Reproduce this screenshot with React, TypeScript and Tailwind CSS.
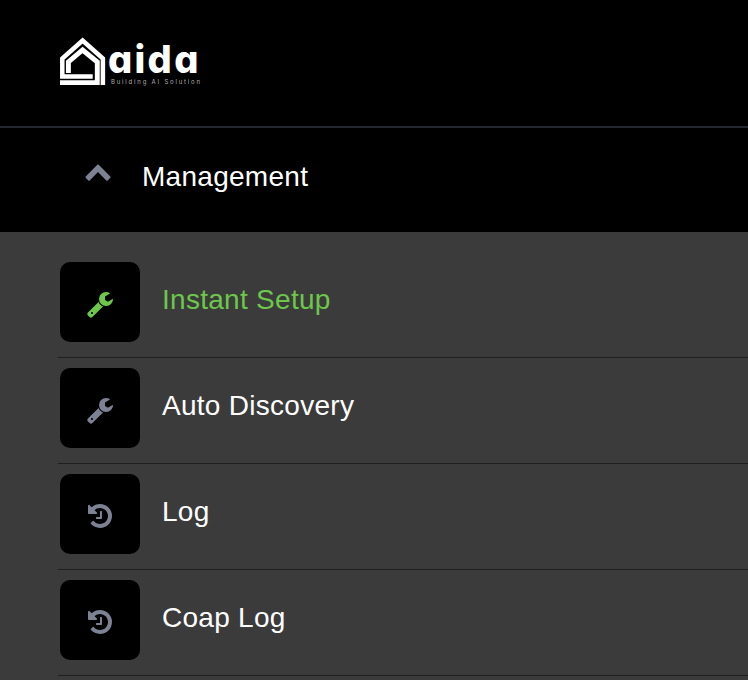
const WRENCH =
  "M384 1472q0-26-19-45t-45-19-45 19-19 45 19 45 45 19 45-19 19-45zm644-420l-682 682q-37 37-90 37-52 0-91-37l-106-108q-38-36-38-90 0-53 38-91l681-681q39 98 114.500 173.500t173.500 114.500zm634-435q0 39-23 106-47 134-164.500 217.500t-258.500 83.500q-185 0-316.500-131.500t-131.500-316.500 131.500-316.500 316.500-131.500q58 0 121.500 16.500t107.500 46.500q16 11 16 28t-16 28l-293 169v224l193 107q5-3 79-48.500t135.500-81 70.500-35.500q15 0 23.500 10t8.500 25z";
const HISTORY =
  "M1664 896q0 156-61 298t-164 245-245 164-298 61q-172 0-327-72.500t-264-204.500q-7-10-6.500-22.500t8.500-20.500l137-138q10-9 25-9 16 2 23 12 73 95 179 147t225 52q104 0 198.500-40.500t163.500-109.500 109.500-163.500 40.500-198.500-40.500-198.500-109.500-163.500-163.500-109.500-198.500-40.500q-98 0-188 35.500t-160 101.500l137 138q31 30 14 69-17 40-59 40h-448q-26 0-45-19t-19-45v-448q0-42 40-59 39-17 69 14l130 129q107-101 244.500-156.500t284.500-55.500q156 0 298 61t245 164 164 245 61 298zm-640-288v448q0 14-9 23t-23 9h-320q-14 0-23-9t-9-23v-64q0-14 9-23t23-9h224v-352q0-14 9-23t23-9h64q14 0 23 9t9 23z";
const CHEVRON_UP =
  "M1683 1331l-166 165q-19 19-45 19t-45-19l-531-531-531 531q-19 19-45 19t-45-19l-166-165q-19-19-19-45.500t19-45.500l742-741q19-19 45-19t45 19l742 741q19 19 19 45.500t-19 45.500z";

function Icon({ path, className }: { path: string; className: string }) {
  return (
    <svg viewBox="0 0 1792 1792" className={`size-7 shrink-0 overflow-visible ${className}`} fill="currentColor">
      <path d={path} />
    </svg>
  );
}

function Logo() {
  return (
    <div className="flex pt-[36px] pl-[60px] text-white">
      <svg viewBox="0 0 46 50" className="h-[50px] w-[46px] shrink-0" fill="none" stroke="currentColor">
        <path d="M42.900 49V22.500L22.600 4.500L2.300 22.500V40.400H32.700" strokeWidth="4.500" />
        <path d="M8.400 37V26L22.600 14L37.300 26V46.600H0" strokeWidth="4.900" />
      </svg>
      <div className="flex flex-col">
        <div className="ml-[2px] h-[42px] pt-[2px] font-['Inter',sans-serif] text-[38px] leading-[42px] font-extrabold tracking-[2.300px] [font-feature-settings:'cv11']">
          aida
        </div>
        <div className="ml-[5px] font-['Inter',sans-serif] text-[6px] leading-[8px] tracking-[1.800px] whitespace-nowrap text-[#b0b0b0]">
          Building AI Solution
        </div>
      </div>
    </div>
  );
}

const items = [
  { label: "Instant Setup", icon: WRENCH, active: true },
  { label: "Auto Discovery", icon: WRENCH, active: false },
  { label: "Log", icon: HISTORY, active: false },
  { label: "Coap Log", icon: HISTORY, active: false },
];

export default function App() {
  return (
    <div className="h-[680px] w-[748px] overflow-hidden bg-[#3b3b3b] font-['Liberation_Sans',Arial,sans-serif] text-[28px] leading-8 tracking-[0.280px] text-white">
      <header className="h-32 border-b-2 border-[#242731] bg-black">
        <Logo />
      </header>
      <div className="flex h-[104px] items-start bg-black pl-[84px]">
        <Icon path={CHEVRON_UP} className="mt-[29px] text-[#7c8294]" />
        <span className="mt-[33px] ml-[30px]">Management</span>
      </div>
      <nav className="pt-5 pl-[58px]">
        {items.map(({ label, icon, active }) => (
          <div key={label} className="flex h-[106px] items-start border-b border-[#1f1f1f] pt-[10px] pl-[2px]">
            <div className="flex size-20 shrink-0 rounded-[10px] bg-black pt-7">
              <Icon
                path={icon}
                className={`${icon === WRENCH ? "ml-[27px]" : "ml-[26px]"} ${active ? "text-[#6cc74b]" : "text-[#7c8294]"}`}
              />
            </div>
            <span className={`mt-[22px] ml-[22px] ${active ? "text-[#6cc74b]" : ""}`}>{label}</span>
          </div>
        ))}
      </nav>
    </div>
  );
}
